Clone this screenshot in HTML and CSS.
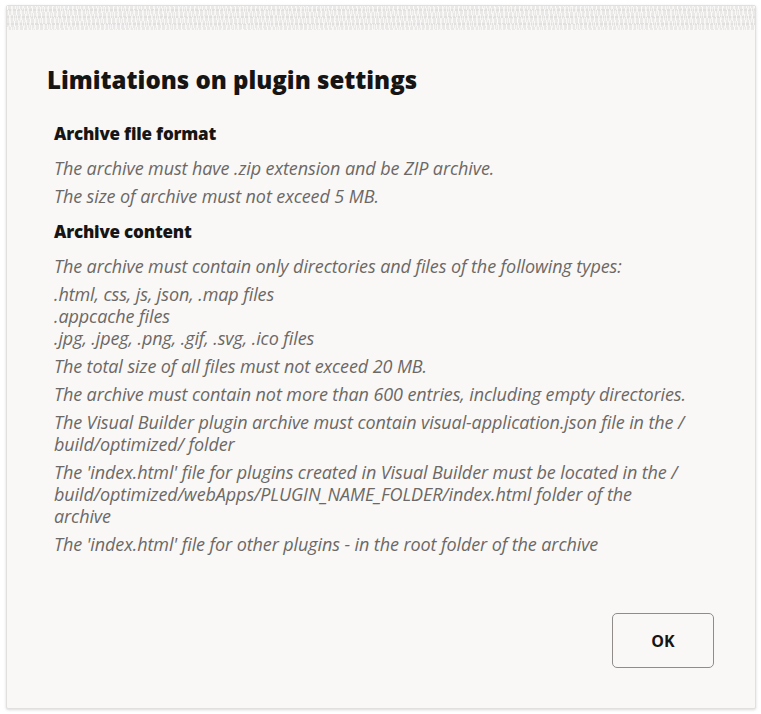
FILE: index.html
```html
<!DOCTYPE html>
<html lang="en">
<head>
<meta charset="UTF-8">
<meta name="viewport" content="width=device-width, initial-scale=1.0">
<title>Limitations on plugin settings</title>
<link rel="stylesheet" href="styles.css">
</head>
<body>
    <div class="dialog">
        <div class="dialog-band"></div>
        <div class="dialog-body">
            <h1 class="dialog-title">Limitations on plugin settings</h1>
            <div class="section">
                <h3>Archive file format</h3>
                <p>The archive must have .zip extension and be ZIP archive.</p>
                <p>The size of archive must not exceed 5 MB.</p>
            </div>
            <div class="section">
                <h3>Archive content</h3>
                <p>The archive must contain only directories and files of the following types:</p>
                <p>.html, css, js, json, .map files<br>.appcache files<br>.jpg, .jpeg, .png, .gif, .svg, .ico files</p>
                <p>The total size of all files must not exceed 20 MB.</p>
                <p>The archive must contain not more than 600 entries, including empty directories.</p>
                <p>The Visual Builder plugin archive must contain visual-application.json file in the / build/optimized/ folder</p>
                <p>The 'index.html' file for plugins created in Visual Builder must be located in the / build/optimized/webApps/PLUGIN_NAME_FOLDER/index.html folder of the archive</p>
                <p>The 'index.html' file for other plugins - in the root folder of the archive</p>
            </div>
        </div>
        <div class="dialog-footer">
            <button class="ok">OK</button>
        </div>
    </div>
</body>
</html>
```

FILE: styles.css
```css
body {
    margin: 0;
    padding: 5px 5px 5px 6px;
    background-color: #fff;
    font-family: "Open Sans", "Noto Sans", sans-serif;
}
.dialog {
    width: 750px;
    height: 704px;
    box-sizing: border-box;
    background-color: #f9f8f7;
    border: 1px solid #e2e0de;
    border-radius: 2px;
    box-shadow: 0 1px 3px rgba(0, 0, 0, 0.15);
    display: flex;
    flex-direction: column;
}
.dialog-band {
    height: 24px;
    background-color: #ebe9e7;
    background-image:
        repeating-linear-gradient(80deg, rgba(255, 255, 255, 0.7) 0 1px, transparent 1px 4px),
        repeating-linear-gradient(100deg, rgba(255, 255, 255, 0.5) 0 1px, transparent 1px 5px),
        repeating-linear-gradient(0deg, transparent 0 5px, rgba(220, 218, 216, 0.6) 5px 7px);
}
.dialog-body {
    flex: 1;
    padding: 0 65px 0 40px;
}
.dialog-title {
    margin: 35px 0 28px;
    font-size: 24px;
    font-weight: 800;
    line-height: 30px;
    color: #161513;
}
.section {
    padding-left: 7px;
}
.section h3 {
    margin: 0 0 12px;
    font-size: 17px;
    font-weight: 800;
    line-height: 22px;
    letter-spacing: -0.2px;
    color: #161513;
}
.section p {
    margin: 0 0 6px;
    font-size: 18px;
    font-style: italic;
    line-height: 22px;
    letter-spacing: -0.1px;
    color: #6c6865;
}
.section + .section {
    margin-top: 14px;
}
.dialog-footer {
    display: flex;
    justify-content: flex-end;
    padding: 0 41px 40px 0;
}
.ok {
    width: 102px;
    height: 55px;
    background-color: transparent;
    border: 1px solid #8f8c89;
    border-radius: 5px;
    font-family: "Open Sans", "Noto Sans", sans-serif;
    font-size: 16px;
    font-weight: 700;
    color: #161513;
    cursor: pointer;
}
```
